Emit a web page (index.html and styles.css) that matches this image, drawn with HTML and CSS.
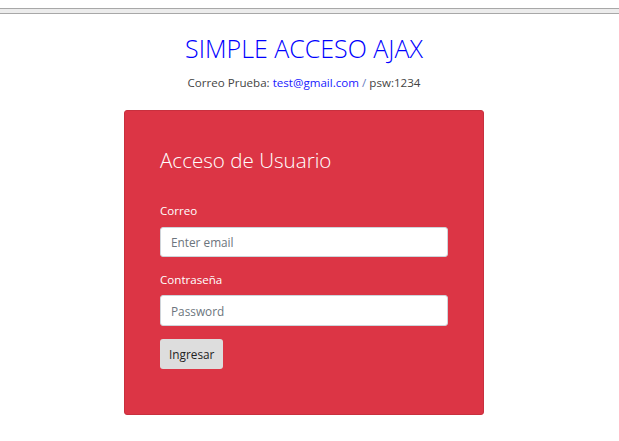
FILE: index.html
```html
<!DOCTYPE html>
<html lang="es">
<head>
<meta charset="utf-8">
<title>Simple Acceso Ajax</title>
<link rel="stylesheet" href="styles.css">
</head>
<body>
<div class="topbar">
  <div class="band"></div>
</div>
<div class="page">
  <h2 class="title">SIMPLE ACCESO AJAX</h2>
  <p class="hint">Correo Prueba: <a class="link" href="#">test@gmail.com</a> <span class="slash">/</span> psw:1234</p>
  <div class="card">
    <h3 class="card-title">Acceso de Usuario</h3>
    <form class="form">
      <div class="group">
        <label class="label" for="email">Correo</label>
        <input class="input" id="email" type="email" placeholder="Enter email">
      </div>
      <div class="group">
        <label class="label" for="pwd">Contraseña</label>
        <input class="input" id="pwd" type="password" placeholder="Password">
      </div>
      <button class="btn" type="button">Ingresar</button>
    </form>
  </div>
</div>
</body>
</html>
```
FILE: styles.css
```css
html, body {
  margin: 0;
  padding: 0;
  background: #ffffff;
}
body {
  font-family: "Open Sans", "Noto Sans", sans-serif;
  font-size: 12.8px;
  color: #333333;
}
.topbar {
  height: 14px;
  padding-top: 8px;
  box-sizing: border-box;
}
.band {
  height: 4px;
  background: #ececec;
  border-top: 1px solid #a8a8a8;
  border-bottom: 1px solid #a8a8a8;
}
.page {
  width: 608px;
  display: flex;
  flex-direction: column;
  align-items: center;
}
.title {
  margin: 20px 0 0 0;
  font-size: 25px;
  font-weight: 300;
  line-height: 28.8px;
  color: #0000ff;
}
.hint {
  margin: 10px 0 0 0;
  font-size: 11.6px;
  line-height: 19.2px;
  color: #444444;
}
.link {
  color: #1a1aff;
  text-decoration: none;
}
.slash {
  color: #6a7cc0;
}
.card {
  margin-top: 18px;
  width: 360px;
  box-sizing: border-box;
  padding: 36px 35px 45px;
  background: #dc3545;
  border-radius: 3px;
  border: 1px solid #c8303e;
  color: #ffffff;
}
.card-title {
  margin: 0 0 27px 0;
  font-size: 20.6px;
  font-weight: 300;
  line-height: 27px;
}
.form {
  display: flex;
  flex-direction: column;
  align-items: flex-start;
}
.group {
  align-self: stretch;
  margin-bottom: 12.8px;
}
.label {
  display: block;
  font-size: 11.6px;
  line-height: 19.2px;
  margin-bottom: 6.4px;
}
.input {
  display: block;
  width: 100%;
  box-sizing: border-box;
  height: 30.4px;
  padding: 0 10px;
  border: 1px solid #ced4da;
  border-radius: 3px;
  font-family: inherit;
  font-size: 11.8px;
  color: #495057;
  background: #ffffff;
}
.input::placeholder {
  color: #6c757d;
}
.btn {
  height: 30.4px;
  padding: 0 9px;
  border: none;
  border-radius: 3px;
  background: #dddddd;
  color: #222222;
  font-family: inherit;
  font-size: 11.8px;
}
```
